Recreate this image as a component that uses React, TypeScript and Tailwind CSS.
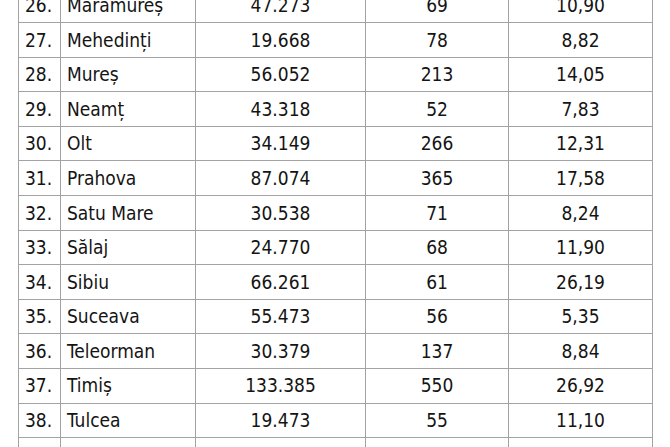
const rows: [string, string, string, string, string][] = [
  ["26.", "Maramureș", "47.273", "69", "10,90"],
  ["27.", "Mehedinți", "19.668", "78", "8,82"],
  ["28.", "Mureș", "56.052", "213", "14,05"],
  ["29.", "Neamț", "43.318", "52", "7,83"],
  ["30.", "Olt", "34.149", "266", "12,31"],
  ["31.", "Prahova", "87.074", "365", "17,58"],
  ["32.", "Satu Mare", "30.538", "71", "8,24"],
  ["33.", "Sălaj", "24.770", "68", "11,90"],
  ["34.", "Sibiu", "66.261", "61", "26,19"],
  ["35.", "Suceava", "55.473", "56", "5,35"],
  ["36.", "Teleorman", "30.379", "137", "8,84"],
  ["37.", "Timiș", "133.385", "550", "26,92"],
  ["38.", "Tulcea", "19.473", "55", "11,10"],
  ["", "", "", "", ""],
];

const cell = "border-l border-[#a3a3a3] flex items-center";

export default function App() {
  return (
    <div className="w-[670px] h-[447px] overflow-hidden bg-white">
      <div
        className="ml-[18px] -mt-[11.6px] w-[635px] text-[19px] text-[#141414]"
        style={{ fontFamily: '"DejaVu Sans Condensed", "DejaVu Sans", sans-serif' }}
      >
        {rows.map((r, i) => (
          <div
            key={i}
            className="grid grid-cols-[42px_135px_170px_143px_145px] h-[34.6px] border-b border-[#a3a3a3]"
          >
            <div className={`${cell} pl-[6px]`}>{r[0]}</div>
            <div className={`${cell} pl-[6px]`}>{r[1]}</div>
            <div className={`${cell} justify-center`}>{r[2]}</div>
            <div className={`${cell} justify-center`}>{r[3]}</div>
            <div className={`${cell} justify-center border-r`}>{r[4]}</div>
          </div>
        ))}
      </div>
    </div>
  );
}
